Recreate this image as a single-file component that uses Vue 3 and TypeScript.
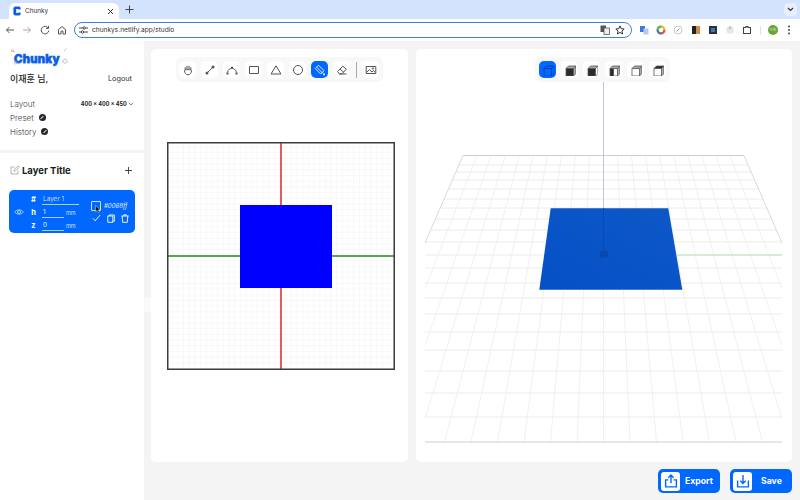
<template>
  <div class="page">
    <header class="tabstrip">
      <div class="tab">
        <svg class="favicon" width="8" height="10" viewBox="0 0 10 12"><path d="M2.500 .5H8L9.500 2V4H6.500V3.500H4V8.500H6.500V8H9.500V10L8 11.500H2.500L.5 10V2Z" fill="#0a5ce6" /></svg>
        <span class="tab-title">Chunky</span>
        <svg class="tab-close" width="7" height="7" viewBox="0 0 7 7"><path d="M1 1L6 6M6 1L1 6" stroke="#333" stroke-width="1" /></svg>
      </div>
      <svg class="new-tab" width="9" height="9" viewBox="0 0 9 9"><path d="M4.500 .5V8.500M.5 4.500H8.500" stroke="#444" stroke-width="1" /></svg>
      <div class="tab-menu">
        <svg width="7" height="5" viewBox="0 0 7 5"><path d="M1 1L3.500 3.500L6 1" fill="none" stroke="#333" stroke-width="1.200" /></svg>
      </div>
    </header>

    <nav class="toolbar">
      <div class="nav-icons">
        <svg width="10" height="10" viewBox="0 0 10 10"><path d="M9 5H1.500M4.500 2L1.500 5L4.500 8" fill="none" stroke="#555" stroke-width="1" /></svg>
        <svg width="10" height="10" viewBox="0 0 10 10"><path d="M1 5H8.500M5.500 2L8.500 5L5.500 8" fill="none" stroke="#aaa" stroke-width="1" /></svg>
        <svg width="10" height="10" viewBox="0 0 10 10"><path d="M8.300 3.200A3.800 3.800 0 1 0 8.800 5.500M8.500 .9V3.400H6" fill="none" stroke="#555" stroke-width="1" /></svg>
        <svg width="10" height="10" viewBox="0 0 10 10"><path d="M1.500 4.500L5 1.500L8.500 4.500V9H6V6.200H4V9H1.500Z" fill="none" stroke="#555" stroke-width="1" /></svg>
      </div>
      <div class="address">
        <svg width="9" height="8" viewBox="0 0 9 8"><path d="M0 2H4M6.500 2H9M0 6H2M5 6H9" stroke="#444" stroke-width="1" /><circle cx="5.200" cy="2" r="1.200" fill="none" stroke="#444" /><circle cx="3.500" cy="6" r="1.200" fill="none" stroke="#444" /></svg>
        <span class="url">chunkys.netlify.app/studio</span>
        <svg class="translate" width="10" height="10" viewBox="0 0 10 10"><rect x=".5" y=".5" width="5.500" height="6.500" fill="#555" /><rect x="4" y="3" width="5.500" height="6.500" fill="#eee" stroke="#555" stroke-width=".8" /></svg>
        <svg width="10" height="10" viewBox="0 0 10 10"><path d="M5 .9L6.200 3.700L9.200 4L6.900 6L7.600 9L5 7.400L2.400 9L3.100 6L.8 4L3.800 3.700Z" fill="none" stroke="#333" stroke-width="1" /></svg>
      </div>
      <div class="extensions">
        <svg width="10" height="10" viewBox="0 0 10 10"><rect x="1" y="1" width="5" height="6" fill="#3f78d9" /><rect x="4.500" y="3.500" width="5" height="6" fill="#b5c9ef" /></svg>
        <svg width="10" height="10" viewBox="0 0 10 10"><circle cx="5" cy="5" r="3.400" fill="none" stroke="#f2b632" stroke-width="2.200" /><circle cx="5" cy="5" r="3.400" fill="none" stroke="#e2574c" stroke-width="2.200" stroke-dasharray="5.300 16" /><circle cx="5" cy="5" r="3.400" fill="none" stroke="#3f78d9" stroke-width="2.200" stroke-dasharray="5.300 16" stroke-dashoffset="-5.300" /><circle cx="5" cy="5" r="3.400" fill="none" stroke="#5cb85c" stroke-width="2.200" stroke-dasharray="5.300 16" stroke-dashoffset="-10.600" /></svg>
        <svg width="10" height="10" viewBox="0 0 10 10"><circle cx="5" cy="5" r="4" fill="#fff" stroke="#bbb" stroke-width=".8" /><path d="M3.500 6.500L6.500 3.500" stroke="#999" stroke-width="1" /></svg>
        <svg width="10" height="10" viewBox="0 0 10 10"><rect x="1" y="1" width="4.500" height="8" fill="#222" /><rect x="5.500" y="1" width="3.500" height="8" fill="#dc8a3c" /></svg>
        <svg width="10" height="10" viewBox="0 0 10 10"><rect x="1" y="1" width="8" height="8" fill="#2a3038" /><rect x="3" y="3" width="4" height="4" fill="#3f78b0" /></svg>
        <svg width="10" height="10" viewBox="0 0 10 10"><circle cx="5" cy="5" r="3.800" fill="#e6e6e6" /><path d="M5 1.500V4" stroke="#999" /></svg>
        <svg width="10" height="10" viewBox="0 0 10 10"><path d="M1.500 2.500H4V1.500H6V2.500H8.500V8.500H1.500Z" fill="none" stroke="#444" stroke-width="1.100" /></svg>
        <span class="ext-sep"></span>
        <span class="avatar">이재</span>
        <svg class="dots" width="4" height="10" viewBox="0 0 4 10"><circle cx="2" cy="1.500" r="1" fill="#444" /><circle cx="2" cy="5" r="1" fill="#444" /><circle cx="2" cy="8.500" r="1" fill="#444" /></svg>
      </div>
    </nav>

    <div class="app">
      <aside class="sidebar">
        <div class="side-top">
          <div class="logo">
            <span class="logo-text">Chunky</span>
            <svg class="logo-deco" width="60" height="18" viewBox="0 0 60 18"><path d="M1.500 1L3.500 3.500H0Z M53 3L55.500 .5 M4.500 13a1.500 1.500 0 1 0 .1 0 M54 11l2 1.200v2l-2 1.200l-2-1.200v-2Z" fill="none" stroke="#aaa" stroke-width=".7" /></svg>
          </div>
          <div class="user-row">
            <span class="user-name">이재훈 님,</span>
            <span class="logout">Logout</span>
          </div>
          <div class="layout-row">
            <span>Layout</span>
            <span class="layout-size">400 x 400 x 450
              <svg width="6" height="4" viewBox="0 0 6 4"><path d="M.7 .7L3 3L5.300 .7" fill="none" stroke="#555" stroke-width=".7" /></svg>
            </span>
          </div>
          <div class="link-row">Preset <i class="link-dot"></i></div>
          <div class="link-row">History <i class="link-dot"></i></div>
        </div>

        <div class="layers">
          <div class="layers-head">
            <svg width="10" height="10" viewBox="0 0 10 10"><path d="M8 5.500V9H1V2H4.500M4 6.200L4.300 4.500L8 .9L9.200 2.100L5.600 5.800Z" fill="none" stroke="#aaa" stroke-width=".9" /></svg>
            <span class="layers-title">Layer Title</span>
            <svg class="add" width="7" height="7" viewBox="0 0 8 8"><path d="M4 0V8M0 4H8" stroke="#333" stroke-width="1" /></svg>
          </div>

          <div class="layer-card">
            <svg class="eye" width="10" height="8" viewBox="0 0 10 8"><path d="M.7 4C2.500 1.200 7.500 1.200 9.300 4C7.500 6.800 2.500 6.800 .7 4Z" fill="none" stroke="#cfe1ff" stroke-width=".8" /><circle cx="5" cy="4" r="1.500" fill="none" stroke="#cfe1ff" stroke-width=".8" /></svg>
            <div class="fields">
              <div class="field"><b>#</b><span class="value wide">Layer 1</span></div>
              <div class="field"><b>h</b><span class="value">1</span><small>mm</small></div>
              <div class="field"><b>z</b><span class="value">0</span><small>mm</small></div>
            </div>
            <div class="layer-side">
              <div class="color-row">
                <span class="swatch">
                  <svg class="cursor" width="6" height="8" viewBox="0 0 6 8"><path d="M.5 .5V6.800L2 5.400L3.300 7.600L4.500 7L3.300 4.800H5.300Z" fill="#111" stroke="#fff" stroke-width=".4" /></svg>
                </span>
                <span class="hex">#0068ff</span>
              </div>
              <div class="layer-actions">
                <svg width="9" height="8" viewBox="0 0 9 8"><path d="M.8 4.300L3.200 6.800L8.200 1" fill="none" stroke="#fff" stroke-width=".9" /></svg>
                <svg width="8" height="9" viewBox="0 0 8 9"><path d="M2 2V1H7.300V7.300H6M.8 2H5.800V8.300H.8Z" fill="none" stroke="#fff" stroke-width=".9" /></svg>
                <svg width="8" height="9" viewBox="0 0 8 9"><path d="M.3 2H7.700M2.800 2V.8H5.200V2M1.200 2L1.700 8.300H6.300L6.800 2" fill="none" stroke="#fff" stroke-width=".9" /></svg>
              </div>
            </div>
          </div>
        </div>
        <span class="resizer"></span>
      </aside>

      <main class="workspace">
        <div class="panels">
          <section class="panel panel-2d">
            <div class="tools tools-2d">
              <template v-for="t in drawTools" :key="t.name">
                <span v-if="t.name === 'image'" class="tool-sep"></span>
                <button class="tool" :class="{ active: t.name === 'fill' }">
                  <svg width="12" height="12" viewBox="0 0 12 12">
                    <path :d="t.d" fill="none" stroke="currentColor" stroke-width="1" />
                    <path v-if="t.solid" :d="t.solid" fill="currentColor" />
                  </svg>
                </button>
              </template>
            </div>
            <svg class="plan" width="228" height="228" viewBox="0 0 228 228">
              <defs>
                <pattern id="plan-grid" width="5.675" height="5.675" patternUnits="userSpaceOnUse">
                  <path d="M5.675 0V5.675H0" fill="none" stroke="#ececec" stroke-width=".7" />
                </pattern>
              </defs>
              <rect width="228" height="228" fill="url(#plan-grid)" />
              <rect x="73" y="63" width="92" height="83" fill="#0000ff" />
              <path d="M1 114H73M165 114H227" stroke="#1d8a1d" stroke-width="1.500" />
              <path d="M114 1V63M114 146V227" stroke="#d62a2a" stroke-width="1.500" />
              <rect x=".75" y=".75" width="226.500" height="226.500" fill="none" stroke="#3c3c3c" stroke-width="1.500" />
            </svg>
          </section>

          <section class="panel panel-3d">
            <svg class="scene" width="376" height="413" viewBox="416 49 376 413">
              <defs>
                <clipPath id="scene-clip"><rect x="425" y="49" width="357" height="413" /></clipPath>
                <linearGradient id="plate" x1="0" y1="1" x2="1" y2="0">
                  <stop offset="0" stop-color="#0450c6" />
                  <stop offset="1" stop-color="#0e58c8" />
                </linearGradient>
              </defs>
              <g clip-path="url(#scene-clip)">
                <line v-for="y in rows" :key="'r' + y" :x1="cx - halfWidth(y)" :x2="cx + halfWidth(y)" :y1="y" :y2="y" stroke="#ececec" stroke-width="1" />
                <line v-for="k in columns" :key="'c' + k" :x1="cx + k * cell(155.5)" y1="155.5" :x2="cx + k * cell(442)" y2="442" :stroke="Math.abs(k) === 10 ? '#cfcfcf' : '#eeeeee'" stroke-width=".8" />
                <line :x1="cx - halfWidth(155.5)" :x2="cx + halfWidth(155.5)" y1="155.5" y2="155.5" stroke="#cfcfcf" stroke-width="1" />
                <line :x1="cx - halfWidth(442)" :x2="cx + halfWidth(442)" y1="442" y2="442" stroke="#cfcfcf" stroke-width="1" />
                <line x1="677" x2="782" y1="255" y2="255" stroke="#b4e4ac" stroke-width="1" />
              </g>
              <line :x1="cx" :x2="cx" y1="82" y2="208" stroke="#c3c3e6" stroke-width="1" />
              <polygon points="550.700,208.300 668.300,208.300 682.300,289.700 539.300,289.700" fill="url(#plate)" />
              <line :x1="cx" :x2="cx" y1="208" y2="253" stroke="#0a48bf" stroke-width="1" />
              <polygon points="600,251.500 608,250.500 608,257 600,258" fill="#0c3f99" opacity=".5" />
            </svg>
            <div class="tools tools-3d">
              <button v-for="(c, i) in viewTools" :key="i" class="tool" :class="{ active: i === 0 }">
                <svg width="12" height="12" viewBox="0 0 12 12">
                  <path v-if="c.gray" :d="c.gray" fill="#a8a8a8" />
                  <path v-if="c.solid" :d="c.solid" fill="#2a2a30" />
                  <path :d="cubeWire" fill="none" :stroke="i === 0 ? '#0a3a9a' : '#555'" stroke-width=".8" />
                </svg>
              </button>
            </div>
          </section>
        </div>

        <div class="actions">
          <button class="action">
            <span class="action-icon">
              <svg width="14" height="14" viewBox="0 0 13 13"><path d="M6.500 8.500V1.200M4 3.500L6.500 1L9 3.500M4 5.500H1.500V12H11.500V5.500H9" fill="none" stroke="#0068ff" stroke-width="1.300" /></svg>
            </span>
            <span class="action-label">Export</span>
          </button>
          <button class="action">
            <span class="action-icon">
              <svg width="14" height="14" viewBox="0 0 13 13"><path d="M6.500 1V8.800M4 6.300L6.500 8.800L9 6.300M1.500 6V12H11.500V6" fill="none" stroke="#0068ff" stroke-width="1.300" /></svg>
            </span>
            <span class="action-label save">Save</span>
          </button>
        </div>
      </main>
    </div>
  </div>
</template>

<script setup lang="ts">
interface DrawTool {
  name: string
  d: string
  solid?: string
}

interface ViewTool {
  solid?: string
  gray?: string
}

const drawTools: DrawTool[] = [
  { name: 'hand', d: 'M3.200 6V3.200M5 5V1.800M7 5V1.800M8.800 6V3.200M2.500 6.500C2.500 9 4 10.800 6 10.800C8 10.800 9.500 9 9.500 6.500C9.500 5.300 2.500 5.300 2.500 6.500Z' },
  { name: 'line', d: 'M3 9L9 3', solid: 'M1.500 9a1.500 1.500 0 1 0 3 0a1.500 1.500 0 1 0-3 0M7.500 3a1.500 1.500 0 1 0 3 0a1.500 1.500 0 1 0-3 0' },
  { name: 'curve', d: 'M1.500 8.500C2 3 9.500 3 10.500 8.500', solid: 'M.5 8.500h2v2h-2ZM9.500 8.500h2v2h-2ZM5 2.800h2v2h-2Z' },
  { name: 'rect', d: 'M1.500 2.500H10.500V9.500H1.500Z' },
  { name: 'triangle', d: 'M6 1.800L11 10H1Z' },
  { name: 'circle', d: 'M1.500 6a4.500 4.500 0 1 0 9 0a4.500 4.500 0 1 0-9 0' },
  { name: 'fill', d: 'M4.500 1.200L10 6.700L6.700 10L1.200 4.500Z M2.500 3L8.800 9.300', solid: 'M9.800 8.500c.8 1 1.200 1.600 1.200 2.100a1 1 0 0 1-2 0c0-.5.300-1.100.8-2.100Z' },
  { name: 'eraser', d: 'M1.500 7.500L6.800 2.200L10.300 5.200L5.800 10H3.500ZM4 5.200L7.700 8.200M3.500 10H10.500' },
  { name: 'image', d: 'M1.200 2.500H10.800V9.500H1.200ZM1.500 8.500L4.500 5.500L7 8L8.500 6.700L10.500 8.500M7.200 4.500a.7 .7 0 1 0 1.400 0a.7 .7 0 1 0-1.400 0' }
]

const front = 'M2 4.500H9.500V12H2Z'
const top = 'M2 4.500L4.500 2H12L9.500 4.500Z'
const side = 'M9.500 4.500L12 2V9.500L9.500 12Z'
const left = 'M2 4.500H5.800V12H2Z'

const cubeWire = 'M2 4.500L4.500 2H12V9.500L9.500 12H2ZM2 4.500H9.500V12M9.500 4.500L12 2'

const viewTools: ViewTool[] = [
  {},
  { solid: front, gray: top + side },
  { solid: front, gray: top },
  { solid: left, gray: top + side },
  { gray: top + side },
  { solid: top, gray: side }
]

// 3D floor grid, read from the perspective of the reference
const cx = 603.5
const rows = [165, 172, 180, 189, 199, 208, 219, 230, 242, 255, 268, 283, 298, 314, 332, 350, 371, 393, 417]
const columns = Array.from({ length: 21 }, (_, i) => i - 10)

function cell(y: number): number {
  return 14.05 + ((y - 155.5) / 286.5) * 12.45
}

function halfWidth(y: number): number {
  return cell(y) * 10
}
</script>

<style scoped>
.page {
  width: 800px;
  height: 500px;
  display: flex;
  flex-direction: column;
  overflow: hidden;
  background: #f4f4f4;
  font-family: Inter, "Noto Sans CJK KR", sans-serif;
  color: #222;
}

.tabstrip {
  height: 19px;
  flex: none;
  display: flex;
  align-items: flex-end;
  padding-left: 9px;
  background: #d3e3fd;
}
.tab {
  width: 110px;
  height: 16px;
  display: flex;
  align-items: center;
  padding: 0 3px 0 4px;
  box-sizing: border-box;
  background: #fff;
  border-radius: 6px 6px 0 0;
}
.favicon {
  margin-right: 4px;
}
.tab-title {
  flex: 1;
  font-size: 6.400px;
  color: #333;
}
.tab-close {
  margin-right: 2px;
}
.new-tab {
  margin: 0 0 5px 6px;
}
.tab-menu {
  width: 13px;
  height: 13px;
  margin: 0 3px 3px auto;
  display: flex;
  align-items: center;
  justify-content: center;
  background: #e6effd;
  border-radius: 4px;
}

.toolbar {
  height: 22px;
  flex: none;
  display: flex;
  align-items: center;
  background: #fff;
}
.nav-icons {
  width: 74px;
  box-sizing: border-box;
  display: flex;
  gap: 7.300px;
  padding-left: 5px;
}
.address {
  width: 558px;
  height: 16px;
  box-sizing: border-box;
  display: flex;
  align-items: center;
  padding: 0 6px 0 4px;
  border: 1.500px solid #3f7fdc;
  border-radius: 9px;
}
.url {
  flex: 1;
  margin-left: 4px;
  font-size: 6.600px;
  color: #333;
}
.translate {
  margin-right: 5px;
}
.extensions {
  flex: 1;
  display: flex;
  align-items: center;
  gap: 7.200px;
  padding-left: 7px;
}
.ext-sep {
  width: 1px;
  height: 9px;
  margin-left: 1px;
  background: #d3e3fd;
}
.avatar {
  width: 10px;
  height: 10px;
  margin-left: -1px;
  border-radius: 50%;
  background: #6aa536;
  color: #d8ecc4;
  font-size: 3.500px;
  line-height: 10px;
  text-align: center;
}
.dots {
  margin-left: 2px;
}

.app {
  flex: 1;
  min-height: 0;
  display: flex;
}

.sidebar {
  position: relative;
  width: 144px;
  flex: none;
  display: flex;
  flex-direction: column;
  background: #fff;
}
.resizer {
  position: absolute;
  left: 144px;
  top: 257px;
  width: 7px;
  height: 14px;
  background: #fafafa;
}
.side-top {
  height: 112px;
  flex: none;
  box-sizing: border-box;
  padding: 6px 12px 0 10px;
  border-bottom: 3px solid #f4f4f4;
}
.logo {
  position: relative;
  height: 16px;
  padding-left: 4px;
}
.logo-text {
  font-size: 11.500px;
  line-height: 16px;
  font-weight: 800;
  letter-spacing: .2px;
  color: #0a5ce6;
  -webkit-text-stroke: .6px #0a5ce6;
  text-shadow: 0 1px 1px #a9c8fa;
}
.logo-deco {
  position: absolute;
  left: 1px;
  top: 1px;
}
.user-row {
  display: flex;
  align-items: center;
  justify-content: space-between;
  margin-top: 8px;
  height: 14px;
}
.user-name {
  font-size: 9px;
  font-weight: 500;
  color: #222;
}
.logout {
  font-size: 7.300px;
  color: #333;
}
.layout-row {
  display: flex;
  justify-content: space-between;
  align-items: center;
  margin: 11.500px -2px 0 0;
  height: 14px;
  font-size: 8px;
  font-weight: 300;
  color: #444;
}
.layout-size {
  font-size: 5.500px;
  font-weight: 700;
  color: #222;
}
.link-row {
  display: flex;
  align-items: center;
  gap: 5px;
  height: 14px;
  font-size: 8px;
  font-weight: 300;
  color: #333;
}
.link-dot {
  position: relative;
  width: 7px;
  height: 7px;
  border-radius: 50%;
  background: #26262c;
}
.link-dot::after {
  content: "";
  position: absolute;
  left: 1.500px;
  top: 3px;
  width: 4px;
  height: 1px;
  background: #ddd;
  transform: rotate(-45deg);
}

.layers {
  padding: 0 9px;
}
.layers-head {
  display: flex;
  align-items: center;
  height: 18px;
  margin-top: 8px;
  padding-left: 1px;
}
.layers-title {
  flex: 1;
  margin-left: 2px;
  font-size: 9.500px;
  font-weight: 700;
  color: #1a1a1a;
}
.add {
  margin-right: 3px;
}

.layer-card {
  height: 43px;
  margin-top: 11px;
  box-sizing: border-box;
  display: flex;
  align-items: center;
  padding: 0 6px 0 5px;
  background: #0068ff;
  border-radius: 5px;
  color: #fff;
}
.eye {
  flex: none;
}
.fields {
  width: 66px;
  margin: 2px 0 0 4px;
}
.field {
  display: flex;
  align-items: center;
  height: 13px;
}
.field b {
  width: 11px;
  margin-right: 3px;
  font-size: 7.500px;
  text-align: center;
}
.value {
  width: 22px;
  padding-left: 1px;
  box-sizing: border-box;
  height: 11px;
  font-size: 6.500px;
  line-height: 10px;
  border-bottom: 1px solid #a9cbff;
  color: #e6f0ff;
}
.value.wide {
  width: 37px;
  font-weight: 300;
}
.field small {
  margin-left: 2px;
  font-size: 5.500px;
  color: #cfe1ff;
}
.layer-side {
  flex: 1;
  margin-left: 2px;
}
.color-row {
  display: flex;
  align-items: center;
}
.swatch {
  position: relative;
  width: 10px;
  height: 10px;
  flex: none;
  border: 1px solid #cfe1ff;
  border-radius: 1px;
  box-sizing: border-box;
  background: #0068ff;
}
.cursor {
  position: absolute;
  left: 3px;
  top: 3px;
}
.hex {
  margin-left: 3px;
  font-size: 6.100px;
  font-style: italic;
  color: #e2edff;
}
.layer-actions {
  display: flex;
  align-items: center;
  gap: 6px;
  margin-top: 3px;
  padding-left: 1px;
}

.workspace {
  flex: 1;
  min-width: 0;
  display: flex;
  flex-direction: column;
  padding: 8px 8px 0 7px;
}
.panels {
  height: 413px;
  flex: none;
  display: flex;
  gap: 8px;
}
.panel {
  position: relative;
  background: #fff;
  border-radius: 5px;
}
.panel-2d {
  width: 257px;
  flex: none;
  display: flex;
  flex-direction: column;
  align-items: center;
  padding-top: 8px;
  box-sizing: border-box;
}
.panel-3d {
  flex: 1;
  overflow: hidden;
}
.scene {
  display: block;
}
.plan {
  align-self: flex-start;
  margin: 60px 0 0 16px;
}

.tools {
  display: flex;
  align-items: center;
  gap: 5px;
  height: 25px;
  padding: 0 4px;
  background: #f8f8f8;
  border-radius: 6px;
}
.tools-2d {
  padding: 0 4px 0 3.500px;
}
.tools-3d {
  position: absolute;
  top: 8px;
  left: 119px;
}
.tool {
  width: 17px;
  height: 17px;
  padding: 0;
  display: flex;
  align-items: center;
  justify-content: center;
  border: 0;
  border-radius: 5px;
  background: #fff;
  color: #555;
}
.tool.active {
  background: #0068ff;
  color: #e3edff;
}
.tool-sep {
  width: 1px;
  height: 16px;
  margin: 0 .5px;
  background: #aaa;
}

.actions {
  display: flex;
  justify-content: flex-end;
  gap: 10px;
  margin-top: 7px;
}
.action {
  width: 62px;
  height: 24px;
  padding: 0 0 0 3px;
  display: flex;
  align-items: center;
  border: 0;
  border-radius: 5px;
  background: #0068ff;
  color: #fff;
  font-family: inherit;
}
.action-icon {
  width: 19px;
  height: 19px;
  display: flex;
  align-items: center;
  justify-content: center;
  background: #fff;
  border-radius: 3px;
}
.action-label {
  margin-left: 5px;
  font-size: 8.700px;
  font-weight: 700;
}
.action-label.save {
  margin-left: 9px;
}
</style>
